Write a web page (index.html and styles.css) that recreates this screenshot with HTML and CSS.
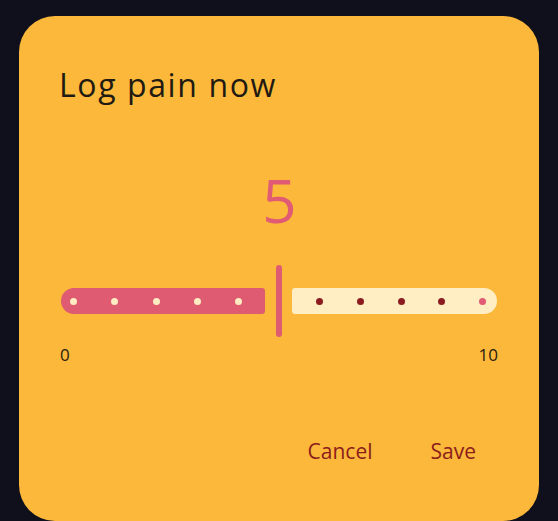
FILE: index.html
```html
<!DOCTYPE html>
<html lang="en">
<head>
    <meta charset="UTF-8">
    <meta name="viewport" content="width=device-width, initial-scale=1.0">
    <title>Log pain now</title>
    <link rel="stylesheet" href="styles.css">
</head>
<body>
    <div class="dialog">
        <h2 class="title">Log pain now</h2>
        <div class="value">5</div>
        <div class="slider">
            <div class="track active">
                <span class="dot"></span>
                <span class="dot"></span>
                <span class="dot"></span>
                <span class="dot"></span>
                <span class="dot"></span>
            </div>
            <div class="thumb"></div>
            <div class="track inactive">
                <span class="dot"></span>
                <span class="dot"></span>
                <span class="dot"></span>
                <span class="dot"></span>
                <span class="dot end"></span>
            </div>
        </div>
        <div class="range-labels">
            <span>0</span>
            <span>10</span>
        </div>
        <div class="actions">
            <button class="text-btn">Cancel</button>
            <button class="text-btn">Save</button>
        </div>
    </div>
</body>
</html>
```

FILE: styles.css
```css
body {
    margin: 0;
    background: #10101c;
    font-family: "Open Sans", sans-serif;
    height: 521px;
    overflow: hidden;
}

.dialog {
    margin: 16px 0 0 19px;
    width: 520px;
    height: 505px;
    box-sizing: border-box;
    padding: 49px 41px 0 40px;
    background: #fbb83a;
    border-radius: 36px;
}

.title {
    margin: 0;
    font-size: 32px;
    font-weight: 400;
    line-height: 40px;
    letter-spacing: 1.6px;
    color: #1f1a12;
}

.value {
    margin-top: 65px;
    font-size: 60px;
    line-height: 60px;
    text-align: center;
    color: #e05b73;
    padding-left: 2px;
}

.slider {
    margin: 35px 0 0 2px;
    display: flex;
    align-items: center;
    height: 72px;
}

.track {
    height: 26px;
    display: flex;
    align-items: center;
    justify-content: space-between;
    box-sizing: border-box;
}

.track.active {
    width: 204px;
    background: #df5b72;
    border-radius: 13px 3px 3px 13px;
    padding: 0 23px 0 9px;
}

.track.inactive {
    width: 205px;
    background: #ffedc4;
    border-radius: 3px 13px 13px 3px;
    padding: 0 11px 0 24px;
}

.dot {
    width: 7px;
    height: 7px;
    border-radius: 50%;
    background: #ffecc2;
}

.inactive .dot {
    background: #8c1b1f;
}

.inactive .dot.end {
    background: #e05b73;
}

.thumb {
    width: 6px;
    height: 72px;
    margin: 0 10px 0 11px;
    border-radius: 3px;
    background: #df5b72;
}

.range-labels {
    margin: 8px 0 0 1px;
    display: flex;
    justify-content: space-between;
    font-size: 17px;
    line-height: 20px;
    color: #2a2010;
}

.actions {
    margin: 74px 10px 0 0;
    display: flex;
    justify-content: flex-end;
    gap: 34px;
}

.text-btn {
    background: none;
    border: none;
    padding: 0 12px;
    font-family: "Open Sans", sans-serif;
    font-size: 21px;
    line-height: 24px;
    color: #8c1d1b;
    cursor: pointer;
}
```
